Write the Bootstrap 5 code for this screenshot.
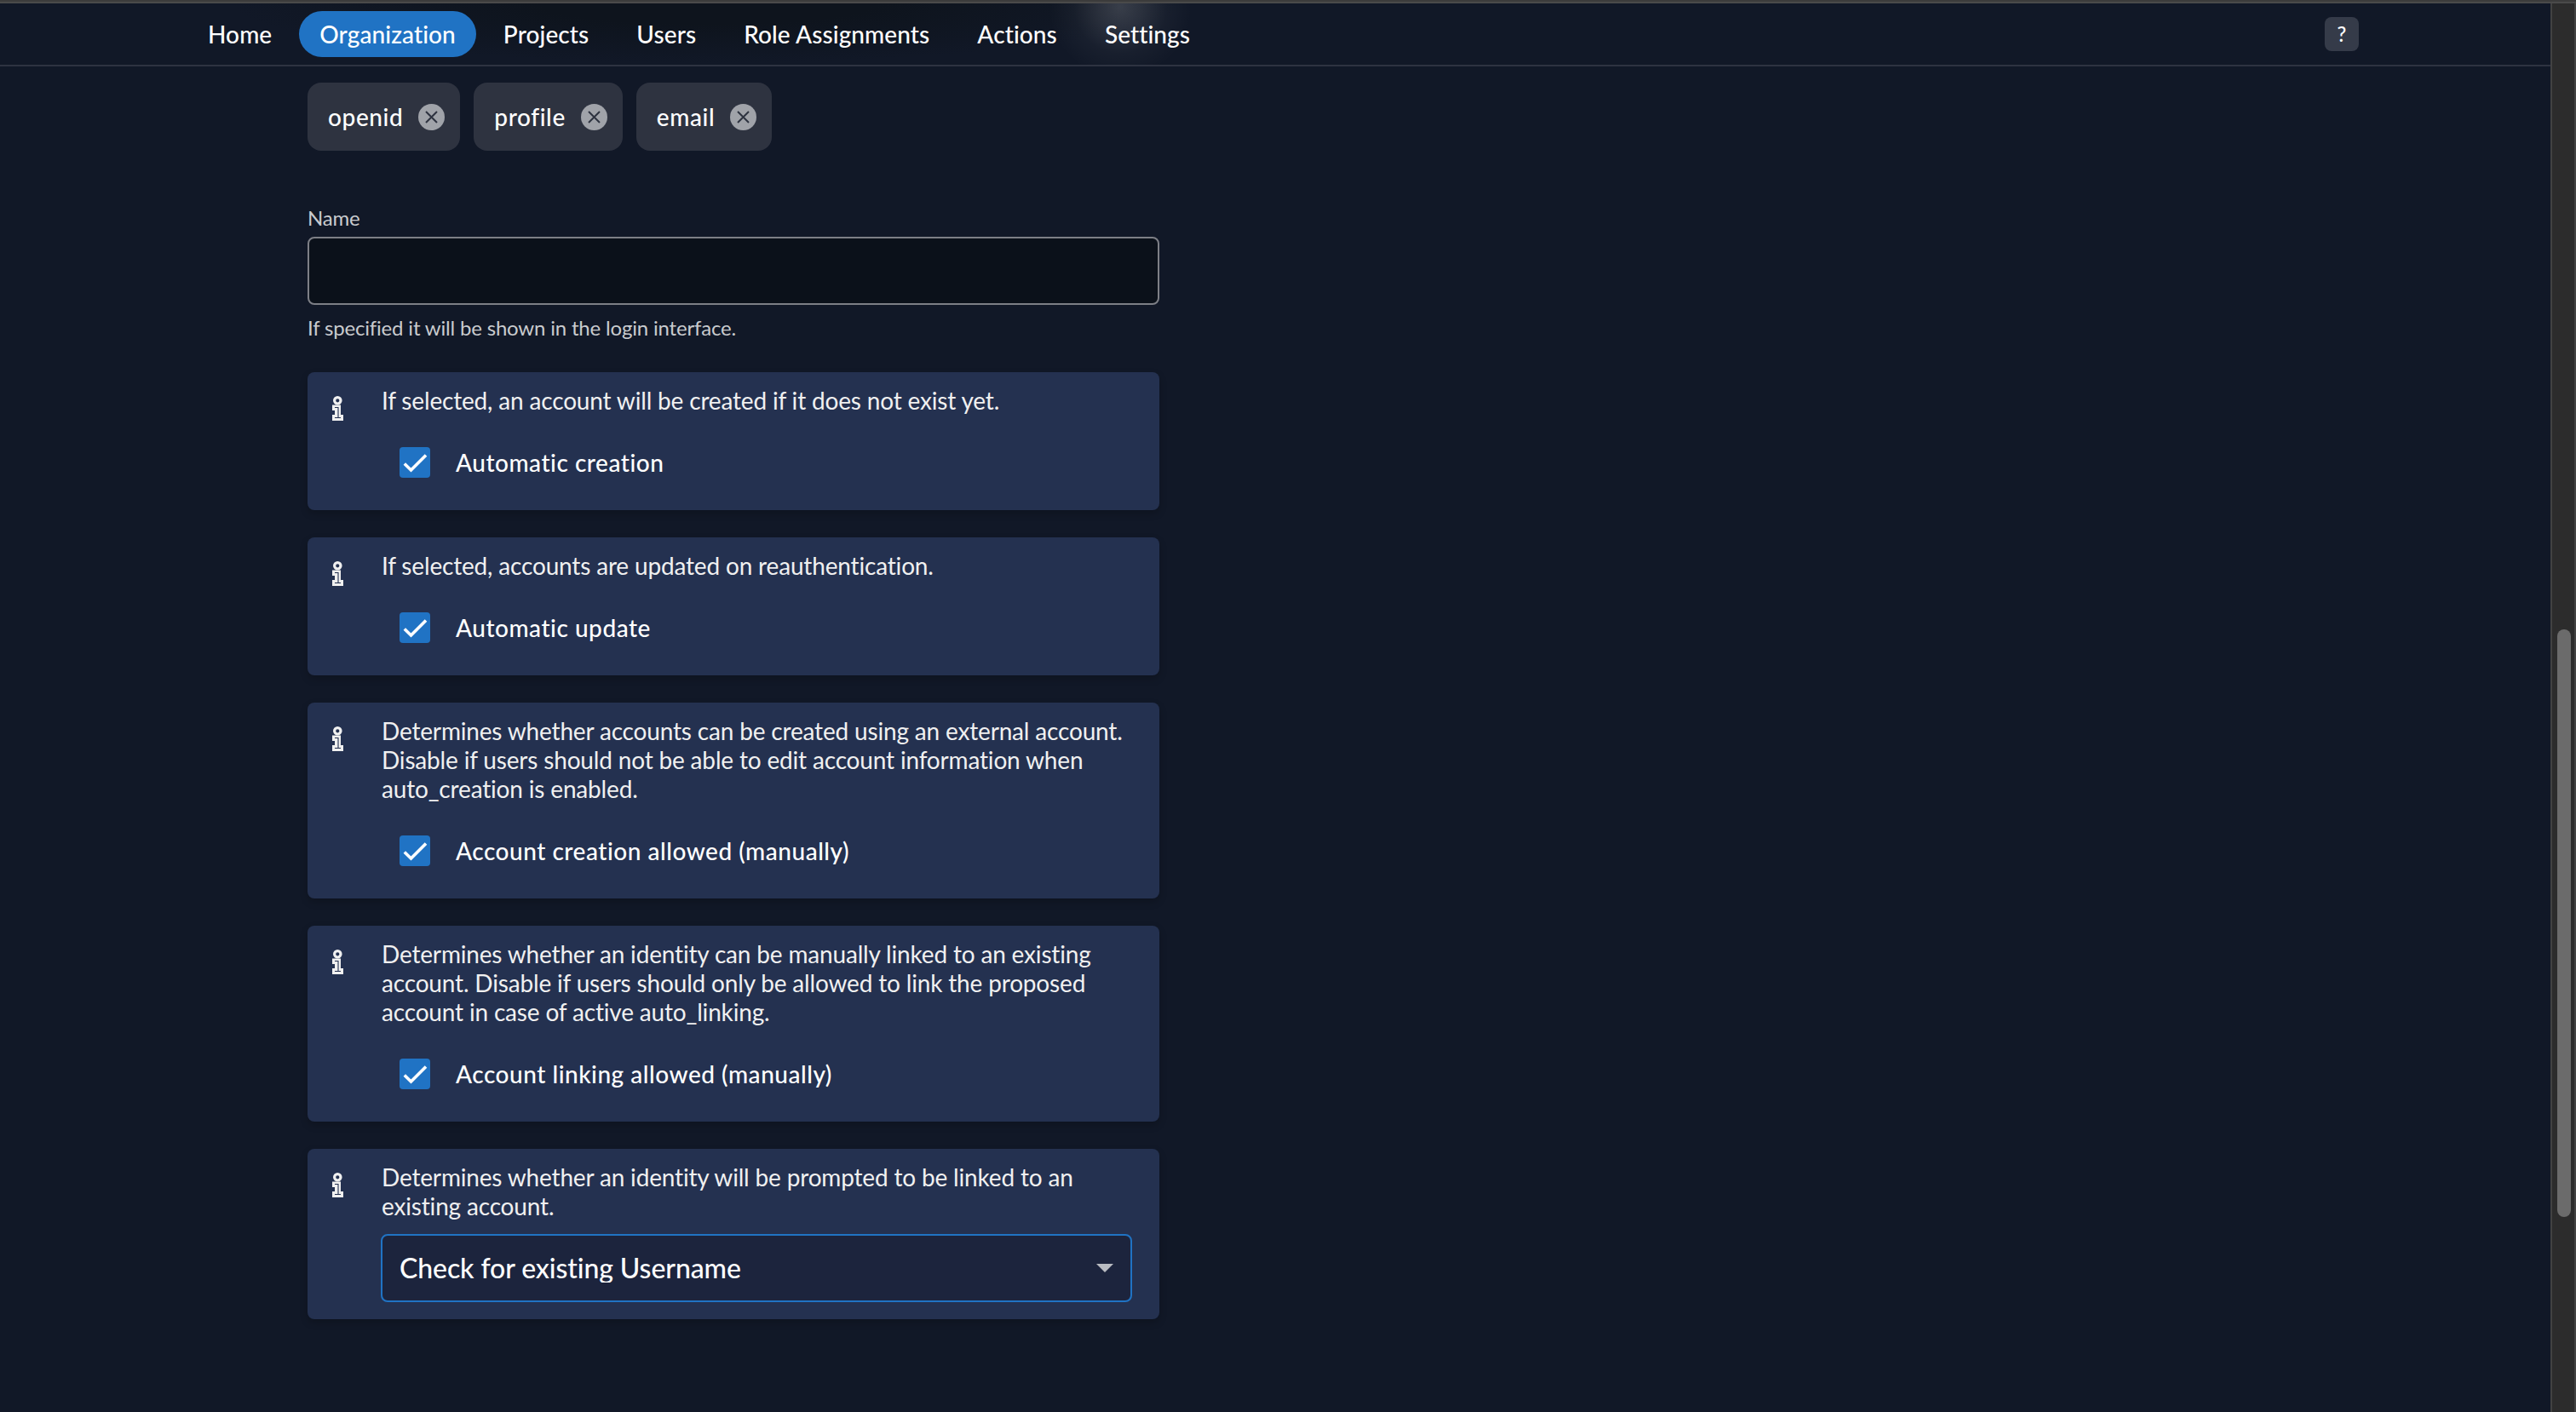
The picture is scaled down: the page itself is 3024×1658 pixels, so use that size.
<!DOCTYPE html>
<html lang="en">
<head>
  <meta charset="UTF-8" />
  <meta name="viewport" content="width=device-width, initial-scale=1.0" />
  <title>Identity Provider</title>
  <link href="https://cdn.jsdelivr.net/npm/bootstrap@5.3.3/dist/css/bootstrap.min.css" rel="stylesheet">
  <style>
    body {
      height: 1658px;
      overflow: hidden;
      background: #111827;
      color: #fff;
      font-family: Lato, sans-serif;
      font-size: 28px;
      font-weight: 500;
      line-height: 34px;
    }
    .window-edge {
      height: 4px;
      background: #4a4a4a;
      border-top: 2px solid #3c3c3c;
    }
    .page-body {
      height: 1654px;
    }
    .top-nav {
      height: 74px;
      padding: 0 225px 0 220px;
      border-bottom: 2px solid #2e3341;
      background:
        radial-gradient(circle 84px at 1315px 4px, rgba(255, 255, 255, .17), rgba(255, 255, 255, .11) 30%, rgba(255, 255, 255, .03) 65%, transparent),
        radial-gradient(ellipse 560px 70px at 830px 0, #0e141d, #0e141d 35%, transparent);
    }
    .top-nav .nav {
      gap: 8px;
      letter-spacing: .1px;
    }
    .top-nav .nav-link {
      height: 54px;
      padding: 10px 24px;
      color: #fff;
      border-radius: 27px;
    }
    .top-nav .nav-link.active {
      background: #2073c4;
    }
    .help-btn {
      width: 40px;
      height: 40px;
      border-radius: 8px;
      background: #353b49;
      color: #fff;
      font-size: 24px;
      font-weight: 500;
    }
    .form-area {
      width: 1000px;
      margin-left: 361px;
      padding-top: 19px;
    }
    .chip {
      height: 80px;
      padding: 0 18px 0 24px;
      border-radius: 16px;
      background: #2e3340;
      letter-spacing: .6px;
    }
    .chip svg {
      width: 31px;
      height: 31px;
      margin-left: 18px;
    }
    .hint {
      font-size: 24px;
      font-weight: 400;
      line-height: 30px;
      letter-spacing: -.18px;
      color: #c9cbce;
    }
    .name-label {
      margin: 64px 0 7px;
    }
    .help-line {
      margin: 12px 0 37px;
    }
    .name-input, .name-input:focus {
      height: 80px;
      border: 2px solid #7d7f86;
      border-radius: 8px;
      background: #0b111a;
      color: #fff;
      font-size: 32px;
    }
    .option-list {
      gap: 32px;
    }
    .info-box {
      padding: 16px 32px 20px 29px;
      border-radius: 8px;
      background: #243150;
      color: #f0f0f0;
      font-weight: 400;
      letter-spacing: -.17px;
      box-shadow: 0 4px 10px rgba(0, 0, 0, .2);
    }
    .info-icon {
      width: 13px;
      height: 29px;
      margin: 12px 45px 0 0;
    }
    .check-line {
      padding: 38px 0 18px 21px;
      color: #fff;
      font-weight: 500;
      letter-spacing: .52px;
    }
    .check-mark {
      width: 36px;
      height: 36px;
      margin-right: 30px;
      border-radius: 4px;
      background: #2073c4;
    }
    .link-select {
      height: 80px;
      margin: 16px 0 0 -1px;
      padding: 0 20px 0 20px;
      border: 2px solid #2073c4;
      border-radius: 8px;
      background: #1c243d;
      color: #fff;
      font-size: 32px;
      font-weight: 500;
      letter-spacing: -.1px;
    }
    .link-select span {
      height: 34px;
      line-height: 33px;
      overflow: hidden;
    }
    .scroll-track {
      width: 30px;
      padding: 735px 4px 0 6px;
      border-left: 2px solid #424242;
      border-right: 2px solid #424242;
      background: #2c2c2c;
    }
    .scroll-thumb {
      width: 16px;
      height: 690px;
      border-radius: 8px;
      background: #6b6b6b;
    }
  </style>
</head>
<body>
  <svg class="d-none">
    <symbol id="info" viewBox="0 0 13 29">
      <circle cx="6.3" cy="5.3" r="3.7" fill="none" stroke="#f0f0f0" stroke-width="3.2"/>
      <path d="M0 10.5H10V22H13V29H0V22H3V17H0Z" fill="#f0f0f0"/>
      <path d="M3 13.5H7V25.5M3 25.5H10" fill="none" stroke="#243150" stroke-width="1.1"/>
    </symbol>
    <symbol id="close" viewBox="0 0 31 31">
      <circle cx="15.5" cy="15.5" r="15.5" fill="#a0a3a9"/>
      <path d="M9 9L22 22M22 9L9 22" stroke="#2e3340" stroke-width="2"/>
    </symbol>
    <symbol id="check" viewBox="0 0 36 36">
      <path d="M5.8 19.5L13.5 27L31 9.5" fill="none" stroke="#fff" stroke-width="3.6"/>
    </symbol>
  </svg>

  <div class="window-edge"></div>
  <div class="page-body d-flex">
    <div class="flex-grow-1">
      <header class="top-nav d-flex align-items-center justify-content-between">
        <nav class="nav">
          <a class="nav-link" href="#">Home</a>
          <a class="nav-link active" href="#">Organization</a>
          <a class="nav-link" href="#">Projects</a>
          <a class="nav-link" href="#">Users</a>
          <a class="nav-link" href="#">Role Assignments</a>
          <a class="nav-link" href="#">Actions</a>
          <a class="nav-link" href="#">Settings</a>
        </nav>
        <button class="help-btn btn p-0 border-0">?</button>
      </header>

      <main class="form-area">
        <div id="scopes" class="d-flex gap-3"></div>

        <label class="hint name-label d-block" for="name">Name</label>
        <input type="text" id="name" class="name-input form-control" />
        <div class="hint help-line">If specified it will be shown in the login interface.</div>

        <div id="options" class="option-list d-flex flex-column"></div>
      </main>
    </div>
    <div class="scroll-track">
      <div class="scroll-thumb"></div>
    </div>
  </div>

  <script>
    const scopes = ["openid", "profile", "email"];

    const options = [
      { text: "If selected, an account will be created if it does not exist yet.", check: "Automatic creation" },
      { text: "If selected, accounts are updated on reauthentication.", check: "Automatic update" },
      { text: "Determines whether accounts can be created using an external account.<br>Disable if users should not be able to edit account information when<br>auto_creation is enabled.", check: "Account creation allowed (manually)" },
      { text: "Determines whether an identity can be manually linked to an existing<br>account. Disable if users should only be allowed to link the proposed<br>account in case of active auto_linking.", check: "Account linking allowed (manually)" },
      { text: "Determines whether an identity will be prompted to be linked to an<br>existing account.", select: "Check for existing Username" }
    ];

    function createChip(scope) {
      return `<div class="chip d-flex align-items-center">${scope}<svg><use href="#close"/></svg></div>`;
    }

    function createControl(option) {
      if (option.select) {
        return `
          <div class="link-select d-flex align-items-center justify-content-between">
            <span>${option.select}</span>
            <svg width="20" height="10"><path d="M0 0H20L10 10Z" fill="#b9bcc2"/></svg>
          </div>`;
      }
      return `
        <div class="check-line d-flex align-items-center">
          <svg class="check-mark"><use href="#check"/></svg>${option.check}
        </div>`;
    }

    function createOption(option) {
      return `
        <div class="info-box d-flex">
          <svg class="info-icon flex-shrink-0"><use href="#info"/></svg>
          <div class="flex-grow-1 text-nowrap">${option.text}${createControl(option)}</div>
        </div>`;
    }

    document.getElementById("scopes").innerHTML = scopes.map(createChip).join("");
    document.getElementById("options").innerHTML = options.map(createOption).join("");
  </script>
  <script src="https://cdn.jsdelivr.net/npm/bootstrap@5.3.3/dist/js/bootstrap.bundle.min.js"></script>
</body>
</html>
